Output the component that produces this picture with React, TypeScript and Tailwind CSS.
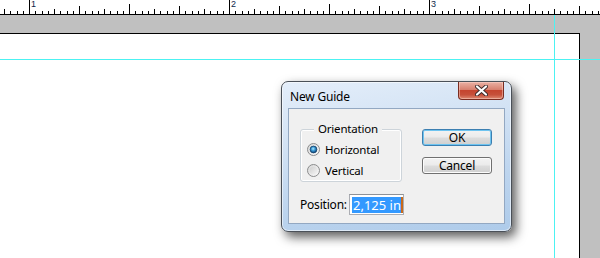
import React from "react";

const font = "font-['Segoe_UI','Noto_Sans',sans-serif] tracking-[-0.2px]";

const Ruler = () => {
  const ticks = [];
  for (let k = -5; k <= 100; k++) {
    const x = Math.round(29 + k * 6.25);
    if (x < 0 || x >= 600) continue;
    const m = ((k % 32) + 32) % 32;
    let h = 3;
    if (m === 0) h = 14;
    else if (m === 16) h = 10;
    else if (m % 8 === 0) h = 8;
    else if (m % 4 === 0) h = 5;
    ticks.push(<rect key={k} x={x} y={14 - h} width={1} height={h} fill="#000" />);
  }
  return (
    <div className="relative h-[15px] bg-white border-b border-black">
      <svg width="600" height="14" className="block" shapeRendering="crispEdges">
        {ticks}
      </svg>
      {[
        { n: "1", x: "left-[31px]" },
        { n: "2", x: "left-[231px]" },
        { n: "3", x: "left-[431px]" },
      ].map((l) => (
        <span
          key={l.n}
          className={`absolute top-[-1px] ${l.x} text-[9px] leading-[11px] text-[#0f1f4a] font-['Liberation_Sans',sans-serif]`}
        >
          {l.n}
        </span>
      ))}
    </div>
  );
};

const Radio = ({ checked }: { checked?: boolean }) => (
  <svg width="13" height="13" viewBox="0 0 13 13" className="shrink-0">
    <defs>
      <linearGradient id="rOuter" x1="0" y1="0" x2="1" y2="1">
        <stop offset="0" stopColor="#d6d6d6" />
        <stop offset="1" stopColor="#fbfbfb" />
      </linearGradient>
      <radialGradient id="rOn" cx="0.45" cy="0.4" r="0.6">
        <stop offset="0" stopColor="#b4ecff" />
        <stop offset="0.45" stopColor="#3a9ad6" />
        <stop offset="1" stopColor="#0b3f74" />
      </radialGradient>
      <linearGradient id="rOff" x1="0" y1="0" x2="1" y2="1">
        <stop offset="0" stopColor="#cfcfcf" />
        <stop offset="1" stopColor="#f4f4f4" />
      </linearGradient>
    </defs>
    <circle cx="6.5" cy="6.5" r="6" fill="url(#rOuter)" stroke="#8b8c8d" strokeWidth="1" />
    {checked ? (
      <circle cx="6.5" cy="6.5" r="3.4" fill="url(#rOn)" stroke="#16456f" strokeWidth="0.8" />
    ) : (
      <circle cx="6.5" cy="6.5" r="3.8" fill="url(#rOff)" />
    )}
  </svg>
);

const Button = ({ label, primary }: { label: string; primary?: boolean }) => (
  <div
    className={`w-[70px] h-[17px] flex items-center justify-center rounded-[3px] border text-[12px] leading-none text-black bg-[linear-gradient(#f3f3f3_0%,#ebebeb_48%,#dddddd_52%,#cfcfcf_100%)] ${
      primary
        ? "border-[#3c7fb1] shadow-[inset_0_0_0_1px_#6ec4f0]"
        : "border-[#707070] shadow-[inset_0_0_0_1px_#fcfcfc]"
    }`}
  >
    {label}
  </div>
);

const Dialog = () => (
  <div
    className={`absolute left-[281px] top-[81px] w-[231px] h-[151px] flex flex-col rounded-[7px] border border-[#4a5058] bg-[linear-gradient(170deg,#e4eefa_0%,#d2e2f4_35%,#bcd4ee_70%,#aecbea_100%)] shadow-[4px_5px_11px_rgba(0,0,0,0.65),inset_0_0_0_1px_rgba(255,255,255,0.55)] ${font}`}
  >
    <div className="h-[26px] flex items-start">
      <span className="pl-[8px] pt-[7px] text-[12px] leading-[15px] text-black">New Guide</span>
      <div className="ml-auto mr-[7px] w-[46px] h-[18px] flex items-center justify-center rounded-b-[4px] border border-t-0 border-[#7a2c20] bg-[linear-gradient(#eab1a4_0%,#d8806f_45%,#c5452f_50%,#c6503a_75%,#de8a72_100%)] shadow-[inset_0_0_0_1px_rgba(255,220,210,0.45)]">
        <svg width="13" height="11" viewBox="0 0 13 11">
          <path d="M2 1.5 L11 9.5 M11 1.5 L2 9.5" stroke="#3a2a2a" strokeWidth="4" strokeLinecap="round" />
          <path d="M2 1.5 L11 9.5 M11 1.5 L2 9.5" stroke="#ffffff" strokeWidth="2.2" strokeLinecap="round" />
        </svg>
      </div>
    </div>
    <div className="mx-[6px] mb-[7px] flex-1 bg-[#f0f0f0] border border-[#93a8c2] pl-[11px] pt-[20px] text-[11.5px]">
      <div className="flex gap-[20px]">
        <div className="relative w-[102px] h-[53px] rounded-[3px] border border-[#cdd4da] shadow-[inset_0_0_0_1px_#ffffff] pl-[6px] pt-[9px]">
          <span className="absolute left-[13px] top-[-9px] px-[4px] bg-[#f0f0f0] leading-[16px] text-black">
            Orientation
          </span>
          <div className="h-[21px] flex items-center gap-[5px] text-black">
            <Radio checked />
            <span>Horizontal</span>
          </div>
          <div className="h-[21px] flex items-center gap-[5px] text-black">
            <Radio />
            <span>Vertical</span>
          </div>
        </div>
        <div className="flex flex-col gap-[11px]">
          <Button label="OK" primary />
          <Button label="Cancel" />
        </div>
      </div>
      <div className="mt-[12px] flex items-center">
        <span className="w-[49px] text-[12px] text-black">Position:</span>
        <div className="w-[55px] h-[21px] bg-white border border-[#abadb3] border-t-[#8f9297] flex items-center pl-[2px]">
          <span className="h-[16px] bg-[#3399ff] text-white text-[13px] tracking-[0px] leading-[16px] pl-[1px]">2,125 in</span>
          <span className="w-[2px] h-[16px] bg-[#c86a1c]" />
        </div>
      </div>
    </div>
  </div>
);

export default function App() {
  return (
    <div className="relative w-[600px] h-[258px] overflow-hidden bg-[#c0c0c0]">
      <Ruler />
      <div className="pt-[18px]">
        <div className="w-[580px] h-[225px] bg-white border-t border-r border-black" />
      </div>
      <div className="absolute left-0 top-[59px] w-full h-px bg-[#4cf2f2]" />
      <div className="absolute left-[554px] top-[15px] bottom-0 w-px bg-[#4cf2f2]" />
      <Dialog />
    </div>
  );
}
